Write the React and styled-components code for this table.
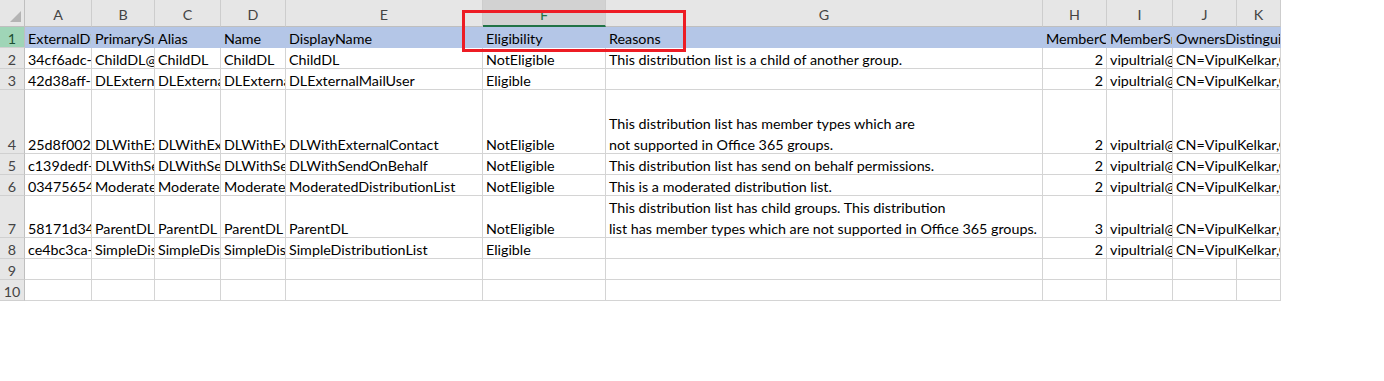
import React from 'react'
import styled, { createGlobalStyle } from 'styled-components'

const GlobalStyle = createGlobalStyle`
  html, body {
    margin: 0;
    padding: 0;
    background: #fff;
  }
`

const COLUMNS = ['A', 'B', 'C', 'D', 'E', 'F', 'G', 'H', 'I', 'J', 'K']

const HEADER = [
  'ExternalDirectoryObjectId',
  'PrimarySmtpAddress',
  'Alias',
  'Name',
  'DisplayName',
  'Eligibility',
  'Reasons',
  'MemberCount',
  'MemberSmtpAddress',
  'OwnersDistinguishedName',
]

const OWNER = 'CN=VipulKelkar,OU=vipultrial.onmicrosoft.com,OU=Microsoft Exchange Hosted Organizations'
const MEMBER = 'vipultrial@vipultrial.onmicrosoft.com'

const ROWS = [
  ['34cf6adc-a1f2-4d8e-9c3b-0f1e2d3c4b5a', 'ChildDL@vipultrial.onmicrosoft.com', 'ChildDL', 'ChildDL', 'ChildDL', 'NotEligible', 'This distribution list is a child of another group.', '2', MEMBER, OWNER],
  ['42d38aff-5b0e-4c71-8a2d-7e6f5a4b3c2d', 'DLExternalMailUser@vipultrial.onmicrosoft.com', 'DLExternalMailUser', 'DLExternalMailUser', 'DLExternalMailUser', 'Eligible', '', '2', MEMBER, OWNER],
  ['25d8f002-1c3d-4e5f-a6b7-c8d9e0f1a2b3', 'DLWithExternalContact@vipultrial.onmicrosoft.com', 'DLWithExternalContact', 'DLWithExternalContact', 'DLWithExternalContact', 'NotEligible', 'This distribution list has member types which are\nnot supported in Office 365 groups.', '2', MEMBER, OWNER],
  ['c139dedf-7a8b-4c9d-8e0f-1a2b3c4d5e6f', 'DLWithSendOnBehalf@vipultrial.onmicrosoft.com', 'DLWithSendOnBehalf', 'DLWithSendOnBehalf', 'DLWithSendOnBehalf', 'NotEligible', 'This distribution list has send on behalf permissions.', '2', MEMBER, OWNER],
  ['03475654-9e8d-4c7b-a6f5-e4d3c2b1a0f9', 'ModeratedDistributionList@vipultrial.onmicrosoft.com', 'ModeratedDistributionList', 'ModeratedDistributionList', 'ModeratedDistributionList', 'NotEligible', 'This is a moderated distribution list.', '2', MEMBER, OWNER],
  ['58171d34-2b3c-4d5e-8f6a-7b8c9d0e1f2a', 'ParentDL@vipultrial.onmicrosoft.com', 'ParentDL', 'ParentDL', 'ParentDL', 'NotEligible', 'This distribution list has child groups. This distribution\nlist has member types which are not supported in Office 365 groups.', '3', MEMBER, OWNER],
  ['ce4bc3ca-1d2e-4f3a-9b4c-5d6e7f8a9b0c', 'SimpleDistributionList@vipultrial.onmicrosoft.com', 'SimpleDistributionList', 'SimpleDistributionList', 'SimpleDistributionList', 'Eligible', '', '2', MEMBER, OWNER],
]

const Page = styled.div`
  position: relative;
  width: 1384px;
  height: 381px;
  background: #fff;
  overflow: hidden;
`

const Sheet = styled.div`
  display: grid;
  grid-template-columns: 25px 67px 63px 66px 65px 197px 123px 437px 64px 66px 64px 44px;
  grid-template-rows: 27px 21px 21px 21px 64px 21px 21px 42px 21px 21px 21px;
  width: 1281px;
  font-family: Lato, 'Liberation Sans', sans-serif;
  font-size: 14.3px;
  color: #000;
`

const Corner = styled.div`
  position: relative;
  background: #e6e6e6;
  border-right: 1px solid #bfbfbf;
  border-bottom: 1px solid #bfbfbf;

  &::after {
    content: '';
    position: absolute;
    right: 3px;
    bottom: 4px;
    border-style: solid;
    border-width: 0 0 11px 11px;
    border-color: transparent transparent #b4b4b4 transparent;
  }
`

const ColHeader = styled.div`
  display: flex;
  align-items: center;
  justify-content: center;
  padding-top: 3px;
  background: ${p => (p.$active ? '#d2d2d2' : '#e6e6e6')};
  color: ${p => (p.$active ? '#217346' : '#444')};
  border-right: 1px solid #cdcdcd;
  border-bottom: ${p => (p.$active ? '2px solid #217346' : '1px solid #bfbfbf')};
`

const RowHeader = styled.div`
  display: flex;
  align-items: flex-end;
  justify-content: center;
  line-height: 21px;
  background: ${p => (p.$active ? '#9fd5b7' : '#e6e6e6')};
  color: ${p => (p.$active ? '#1d4f33' : '#444')};
  border-right: 1px solid #bfbfbf;
  border-bottom: 1px solid #d0d0d0;
`

const Cell = styled.div`
  display: flex;
  align-items: flex-end;
  justify-content: ${p => (p.$right ? 'flex-end' : 'flex-start')};
  grid-column: ${p => (p.$span ? `span ${p.$span}` : 'auto')};
  min-width: 0;
  padding: 0 3px;
  line-height: 21px;
  white-space: pre;
  overflow: hidden;
  background: ${p => (p.$fill ? '#b4c6e7' : '#fff')};
  border-right: 1px solid ${p => (p.$fill ? '#b4c6e7' : '#d4d4d4')};
  border-bottom: 1px solid ${p => (p.$fill ? '#b4c6e7' : '#d4d4d4')};
`

const Text = styled.span`
  transform: translateY(2px);
`

const Callout = styled.div`
  position: absolute;
  left: 462px;
  top: 10px;
  width: 224px;
  height: 42px;
  box-sizing: border-box;
  border: 3px solid #ed1c24;
  pointer-events: none;
`

const DataRow = ({ values, fill }) =>
  values.map((v, i) => (
    <Cell key={i} $fill={fill} $right={i === 7 && !fill} $span={i === 9 ? 2 : 0}>
      <Text>{v}</Text>
    </Cell>
  ))

const EmptyRow = () => COLUMNS.map(c => <Cell key={c} />)

export default function App() {
  return (
    <Page>
      <GlobalStyle />
      <Sheet>
        <Corner />
        {COLUMNS.map(c => (
          <ColHeader key={c} $active={c === 'F'}>
            {c}
          </ColHeader>
        ))}

        <RowHeader $active>
          <Text>1</Text>
        </RowHeader>
        <DataRow values={HEADER} fill />

        {ROWS.map((row, i) => (
          <React.Fragment key={i}>
            <RowHeader>
              <Text>{i + 2}</Text>
            </RowHeader>
            <DataRow values={row} />
          </React.Fragment>
        ))}

        <RowHeader>
          <Text>9</Text>
        </RowHeader>
        <EmptyRow />
        <RowHeader>
          <Text>10</Text>
        </RowHeader>
        <EmptyRow />
      </Sheet>
      <Callout />
    </Page>
  )
}
